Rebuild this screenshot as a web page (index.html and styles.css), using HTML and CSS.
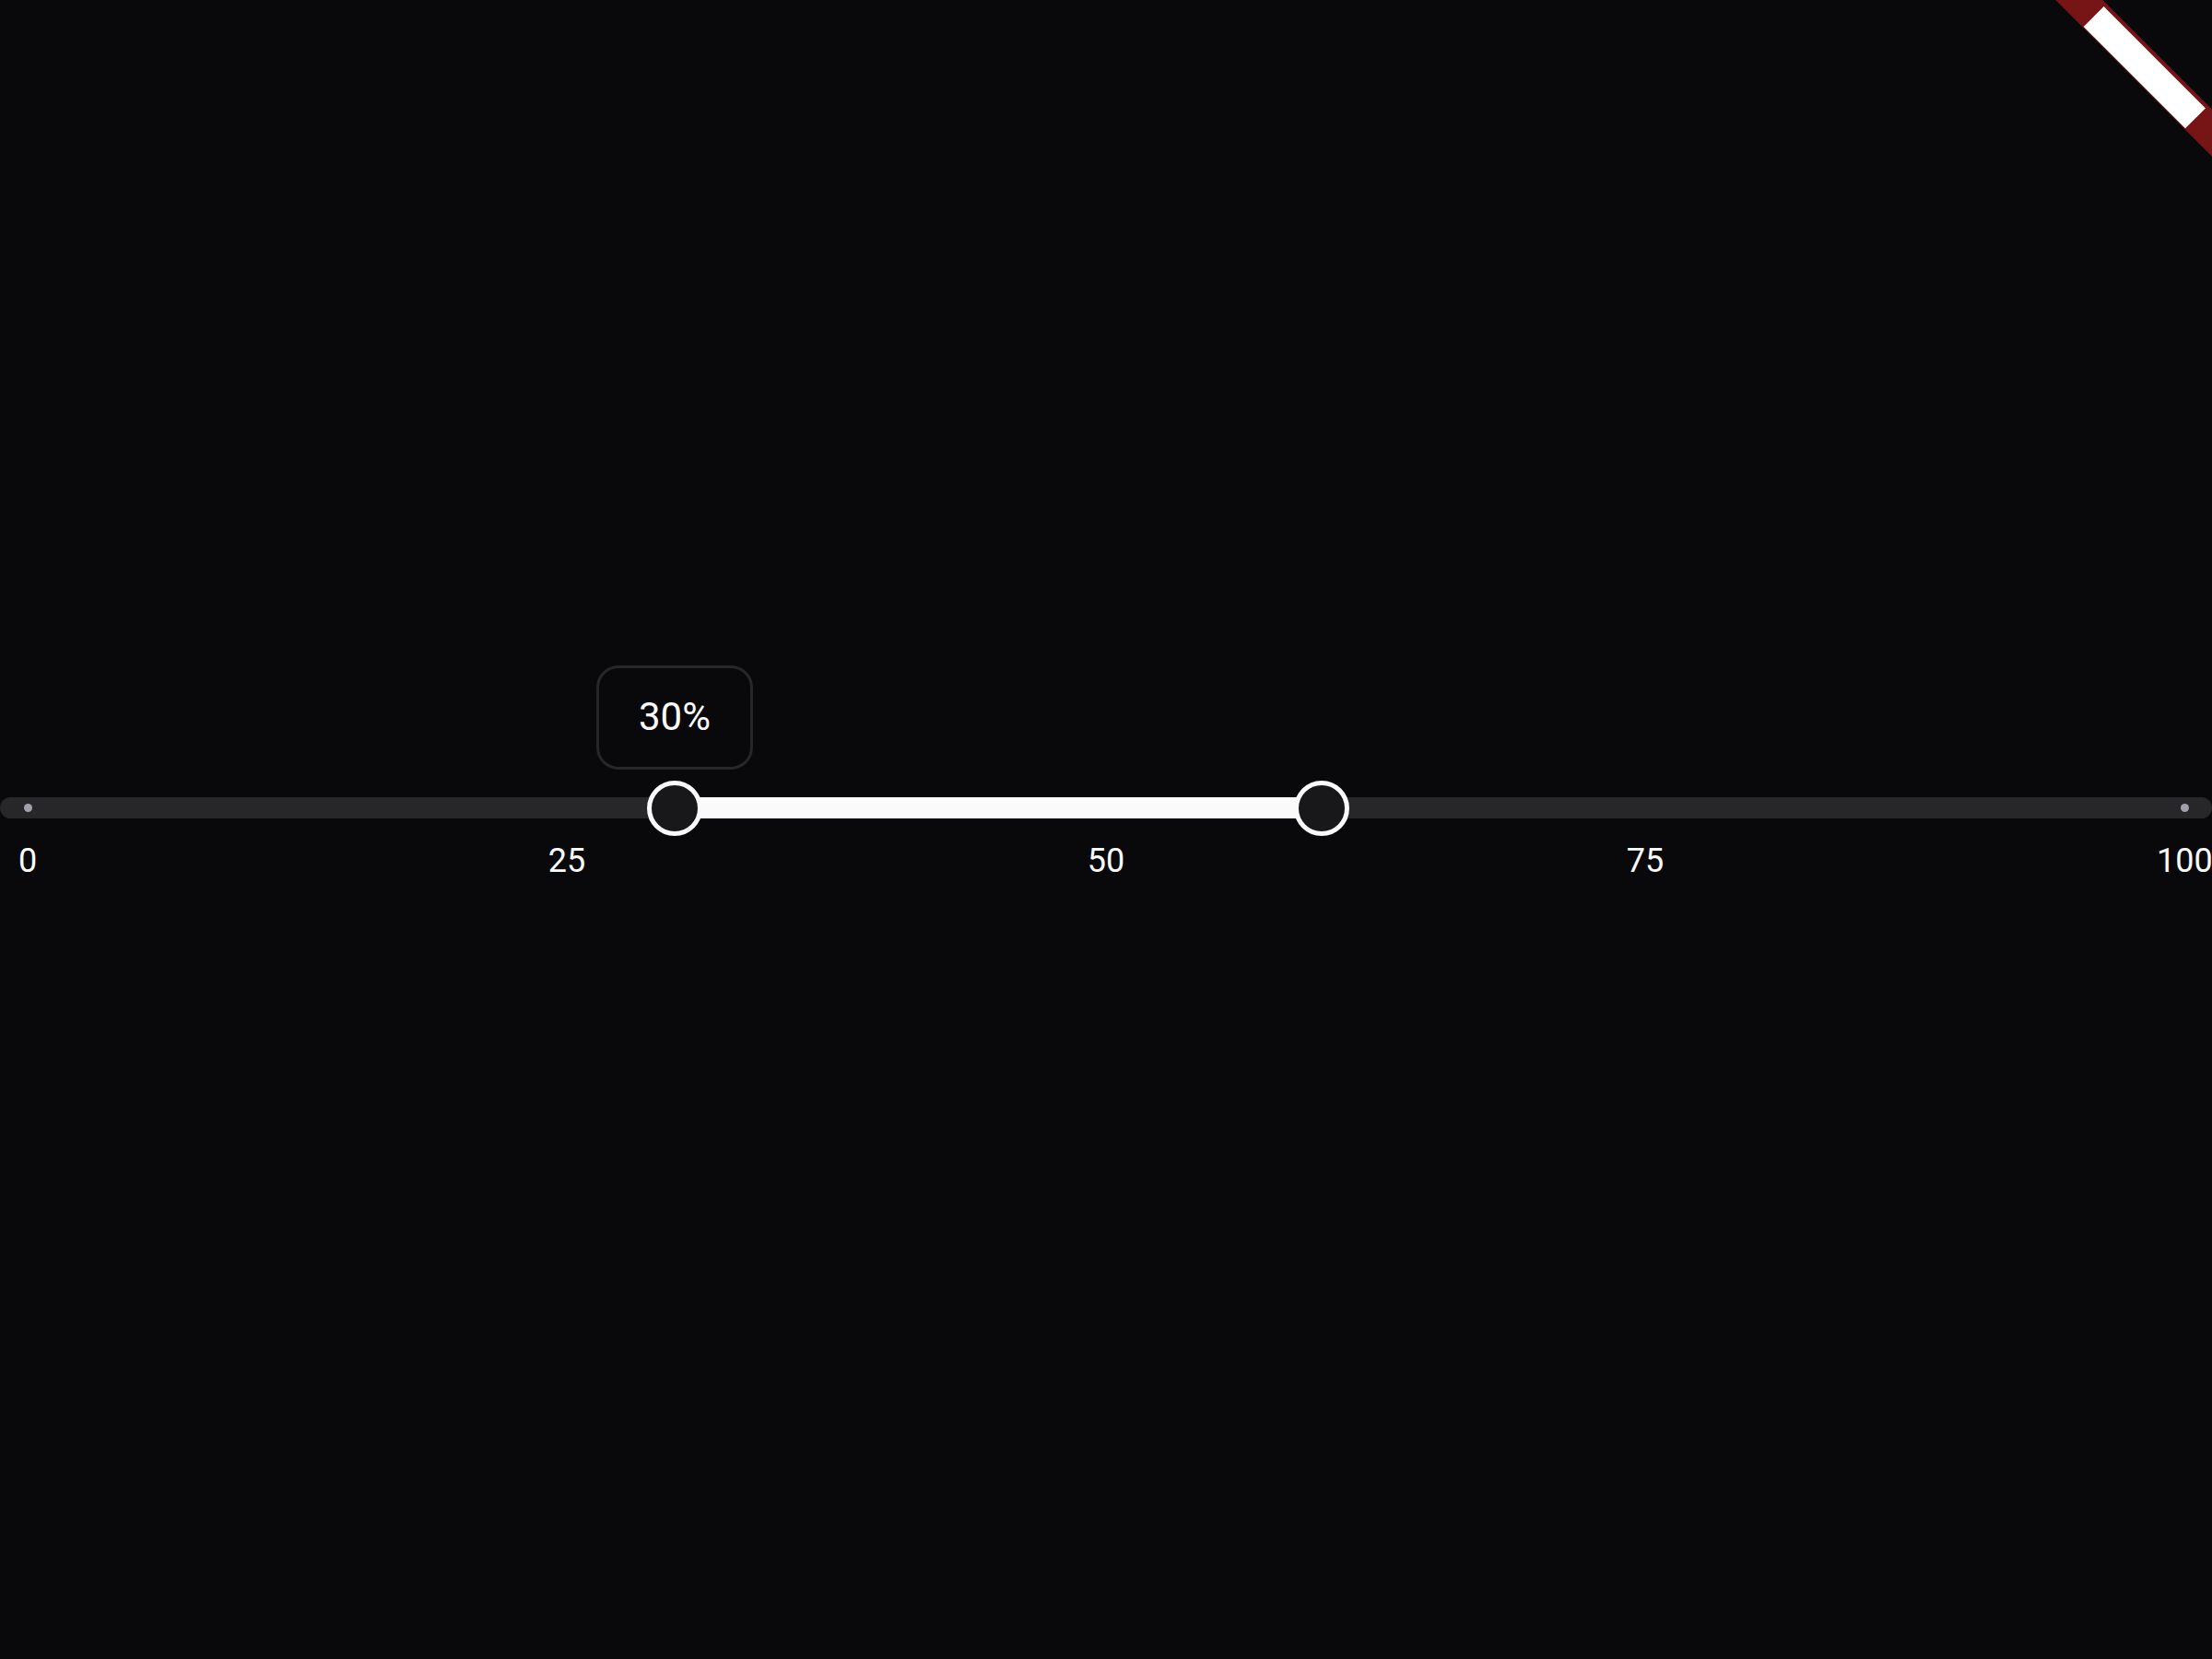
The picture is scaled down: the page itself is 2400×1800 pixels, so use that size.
FILE: index.html
```html
<!DOCTYPE html>
<html lang="en">
<head>
<meta charset="utf-8">
<title>Range slider</title>
<link rel="stylesheet" href="styles.css">
</head>
<body>
<div class="stage">
  <div class="slider">
    <div class="track">
      <span class="dot dot-start"></span>
      <span class="dot dot-end"></span>
      <div class="range" style="left: calc(30px + 0.3 * (100% - 60px)); width: calc(0.3 * (100% - 60px));"></div>
      <div class="thumb" style="left: calc(30px + 0.3 * (100% - 60px));">
        <div class="tooltip">30%</div>
      </div>
      <div class="thumb" style="left: calc(30px + 0.6 * (100% - 60px));"></div>
    </div>
    <div class="labels">
      <span class="label">0</span>
      <span class="label">25</span>
      <span class="label">50</span>
      <span class="label">75</span>
      <span class="label">100</span>
    </div>
  </div>
</div>
<svg class="banner" width="200" height="200" viewBox="0 0 200 200" aria-hidden="true">
  <g transform="translate(200,0) rotate(45)">
    <rect x="-120" y="84" width="240" height="36" fill="#771516"/>
    <rect x="-78" y="88" width="156" height="31" fill="#ffffff"/>
  </g>
</svg>
</body>
</html>
```

FILE: styles.css
```css
html, body {
  margin: 0;
  padding: 0;
  background: #09090b;
}

body {
  width: 2400px;
  height: 1800px;
  overflow: hidden;
  position: relative;
  font-family: Roboto, "Noto Sans", sans-serif;
  color: #fafafa;
}

.stage {
  padding-top: 865px;
}

.slider {
  display: flex;
  flex-direction: column;
  gap: 24px;
}

.track {
  position: relative;
  height: 23px;
  background: #27272a;
  border-radius: 12px;
}

.dot {
  position: absolute;
  top: 50%;
  width: 9px;
  height: 9px;
  margin-top: -4.5px;
  border-radius: 50%;
  background: #a1a1aa;
}

.dot-start {
  left: 25.5px;
}

.dot-end {
  right: 25.5px;
}

.range {
  position: absolute;
  top: 0;
  height: 100%;
  background: #fafafa;
}

.thumb {
  position: absolute;
  top: 50%;
  width: 60px;
  height: 60px;
  box-sizing: border-box;
  border: 5px solid #fafafa;
  border-radius: 50%;
  background: #18181b;
  transform: translate(-50%, -50%);
}

.tooltip {
  position: absolute;
  left: 50%;
  bottom: calc(100% + 17px);
  transform: translateX(-50%);
  padding: 32px 43px 33px;
  border: 3px solid #27272a;
  border-radius: 24px;
  background: #09090b;
  font-size: 42px;
  line-height: 42px;
  white-space: nowrap;
}

.labels {
  display: flex;
  justify-content: space-between;
}

.label {
  width: 60px;
  text-align: center;
  font-size: 36px;
  line-height: 44px;
}

.banner {
  position: absolute;
  top: 0;
  right: 0;
}
```
